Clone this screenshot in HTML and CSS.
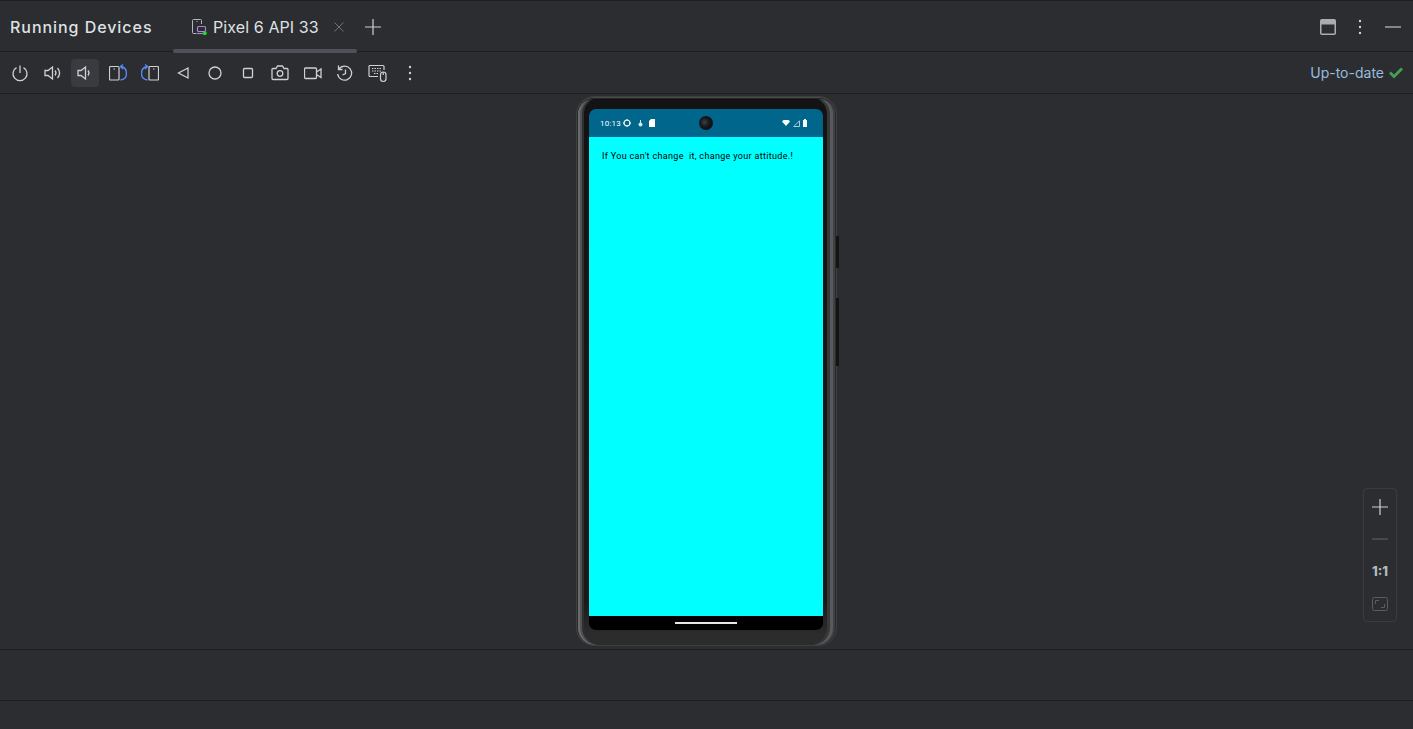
FILE: index.html
```html
<!DOCTYPE html>
<html lang="en">
<head>
    <meta charset="UTF-8">
    <title>Running Devices</title>
    <link rel="stylesheet" href="styles.css">
</head>
<body>
    <div class="header">
        <div class="header-title">Running Devices</div>
        <div class="tab">
            <svg class="tab-icon" width="18" height="18" viewBox="0 0 18 18" fill="none">
                <path d="M6 15.500H3.500a1 1 0 0 1-1-1v-12a1 1 0 0 1 1-1h7a1 1 0 0 1 1 1V6" stroke="#b4b8bf"/>
                <path d="M6.500 3.500h1" stroke="#b4b8bf"/>
                <rect x="7.500" y="8.500" width="8" height="5" rx="1" stroke="#a883d8" stroke-width="1.200"/>
                <path d="M6.500 15.500h8" stroke="#a883d8" stroke-width="1.200"/>
                <circle cx="14.800" cy="15.200" r="2" fill="#1fdc1f"/>
            </svg>
            <span class="tab-label">Pixel 6 API 33</span>
            <svg class="tab-close" width="10" height="10" viewBox="0 0 10 10" fill="none">
                <path d="M.5.5l9 9M9.500.5l-9 9" stroke="#6f737a"/>
            </svg>
        </div>
        <svg class="tab-add" width="18" height="18" viewBox="0 0 18 18" fill="none">
            <path d="M9 1v16M1 9h16" stroke="#ced0d6" stroke-width="1.200"/>
        </svg>
        <div class="header-right">
            <svg width="16" height="16" viewBox="0 0 16 16" fill="none">
                <rect x=".75" y=".75" width="14.500" height="14.500" rx="1" stroke="#a8adb4" stroke-width="1.500"/>
                <rect x="1" y="1" width="14" height="4.500" fill="#a8adb4"/>
            </svg>
            <svg width="4" height="16" viewBox="0 0 4 16" fill="#ced0d6">
                <circle cx="2" cy="2" r="1.200"/><circle cx="2" cy="8" r="1.200"/><circle cx="2" cy="14" r="1.200"/>
            </svg>
            <svg class="header-minimize" width="16" height="16" viewBox="0 0 16 16" fill="none">
                <path d="M0 8h16" stroke="#a8adb4" stroke-width="1.400"/>
            </svg>
        </div>
    </div>

    <div class="toolbar">
        <div class="tool">
            <svg width="18" height="18" viewBox="0 0 18 18" fill="none" stroke="#ced0d6" stroke-width="1.300">
                <path d="M9 1.500v7.500"/><path d="M5.500 3.600a7 7 0 1 0 7 0"/>
            </svg>
        </div>
        <div class="tool">
            <svg width="18" height="18" viewBox="0 0 18 18" fill="none" stroke="#ced0d6" stroke-width="1.300">
                <path d="M1 6.500v5h3l4.500 3.500v-12L4 6.500z"/><path d="M11 6.500c1.200 1.500 1.200 3.500 0 5"/><path d="M13.500 4c2.500 3 2.500 7 0 10"/>
            </svg>
        </div>
        <div class="tool tool-active">
            <svg width="18" height="18" viewBox="0 0 18 18" fill="none" stroke="#ced0d6" stroke-width="1.300">
                <path d="M2 6.500v5h3l4.500 3.500v-12L5 6.500z"/><path d="M12 6.500c1.200 1.500 1.200 3.500 0 5"/>
            </svg>
        </div>
        <div class="tool">
            <svg width="18" height="18" viewBox="0 0 18 18" fill="none">
                <rect x=".5" y="2.500" width="9.500" height="13.500" rx="1" stroke="#ced0d6" stroke-width="1.200"/>
                <path d="M4.500 5h1.500" stroke="#ced0d6"/>
                <path d="M11.500 2.500C15.500 3 17.500 6 17.500 9.500S15.500 15.500 11.500 16" stroke="#548af7" stroke-width="1.400"/>
                <path d="M14 .5L11.500 2.500 14 5" stroke="#548af7" stroke-width="1.300"/>
            </svg>
        </div>
        <div class="tool">
            <svg width="18" height="18" viewBox="0 0 18 18" fill="none">
                <rect x="8" y="2.500" width="9.500" height="13.500" rx="1" stroke="#ced0d6" stroke-width="1.200"/>
                <path d="M12 5h1.500" stroke="#ced0d6"/>
                <path d="M6.500 2.500C2.500 3 .5 6 .5 9.500S2.500 15.500 6.500 16" stroke="#548af7" stroke-width="1.400"/>
                <path d="M4 .5L6.500 2.500 4 5" stroke="#548af7" stroke-width="1.300"/>
            </svg>
        </div>
        <div class="tool">
            <svg width="18" height="18" viewBox="0 0 18 18" fill="none" stroke="#ced0d6" stroke-width="1.300">
                <path d="M14 4v10L4.500 9z"/>
            </svg>
        </div>
        <div class="tool">
            <svg width="18" height="18" viewBox="0 0 18 18" fill="none" stroke="#ced0d6" stroke-width="1.300">
                <circle cx="9" cy="9" r="6"/>
            </svg>
        </div>
        <div class="tool">
            <svg width="18" height="18" viewBox="0 0 18 18" fill="none" stroke="#ced0d6" stroke-width="1.300">
                <rect x="4.500" y="4.500" width="9" height="9" rx="1"/>
            </svg>
        </div>
        <div class="tool">
            <svg width="18" height="18" viewBox="0 0 18 18" fill="none" stroke="#ced0d6" stroke-width="1.300">
                <path d="M1 5.500a1 1 0 0 1 1-1h3L6.500 2h5L13 4.500h3a1 1 0 0 1 1 1v9a1 1 0 0 1-1 1H2a1 1 0 0 1-1-1z"/><circle cx="9" cy="9.500" r="2.800"/>
            </svg>
        </div>
        <div class="tool">
            <svg width="18" height="18" viewBox="0 0 18 18" fill="none" stroke="#ced0d6" stroke-width="1.300">
                <rect x=".5" y="4" width="12" height="10.500" rx="1"/><path d="M12.500 8L17 5v8.500L12.500 10.500"/>
            </svg>
        </div>
        <div class="tool">
            <svg width="18" height="18" viewBox="0 0 18 18" fill="none" stroke="#ced0d6" stroke-width="1.300">
                <path d="M3 5a7 7 0 1 1-1.300 5"/><path d="M2.500 1.500V5.500H6.500"/><path d="M9.500 5.500v4L6.500 11"/>
            </svg>
        </div>
        <div class="tool">
            <svg width="20" height="20" viewBox="0 0 20 20" fill="none" stroke="#ced0d6" stroke-width="1.200">
                <path d="M10 13.500H2a1 1 0 0 1-1-1v-9a1 1 0 0 1 1-1h13a1 1 0 0 1 1 1V7"/>
                <path d="M4 5.500h9M4 8h9M6 10.500h5" stroke-dasharray="1.500 1"/>
                <rect x="12.500" y="9" width="5.500" height="9.500" rx="2.700"/><path d="M15.200 9v3"/>
            </svg>
        </div>
        <div class="tool">
            <svg width="4" height="16" viewBox="0 0 4 16" fill="#ced0d6">
                <circle cx="2" cy="2" r="1.200"/><circle cx="2" cy="8" r="1.200"/><circle cx="2" cy="14" r="1.200"/>
            </svg>
        </div>
        <div class="status">
            <span>Up-to-date</span>
            <svg width="14" height="12" viewBox="0 0 14 12" fill="#499c54">
                <path d="M0 6.500L2 4.500 5 7.500 12 .5 14 2.500 5 11.500z"/>
            </svg>
        </div>
    </div>

    <div class="canvas">
        <div class="phone">
            <div class="phone-key phone-key-power"></div>
            <div class="phone-key phone-key-volume"></div>
            <div class="screen">
                <div class="statusbar">
                    <div class="statusbar-left">
                        <span class="clock">10:13</span>
                        <svg width="8" height="8" viewBox="0 0 8 8" fill="none" stroke="#fff" stroke-width="1.200">
                            <circle cx="4" cy="4" r="3"/><path d="M4 0v2M4 6v2M0 4h2M6 4h2" stroke-width=".8"/>
                        </svg>
                        <svg class="status-mic" width="5" height="7" viewBox="0 0 5 7" fill="#d5e6ee">
                            <circle cx="2.500" cy="4.500" r="2"/><rect x="2" y="0" width="1" height="3"/>
                        </svg>
                        <svg class="status-sd" width="6" height="8" viewBox="0 0 6 8" fill="#fff">
                            <path d="M0 2L2 0h4v8H0z"/>
                        </svg>
                    </div>
                    <div class="camera"></div>
                    <div class="statusbar-right">
                        <svg width="8" height="6" viewBox="0 0 8 6" fill="#fff"><path d="M0 1.500L1.500 0h5L8 1.500 4 6z"/></svg>
                        <svg width="7" height="7" viewBox="0 0 7 7" fill="none" stroke="#d5e6ee" stroke-width=".8"><path d="M6.500.8v5.700H.8z"/></svg>
                        <svg width="4" height="8" viewBox="0 0 4 8" fill="#fff"><path d="M1 0h2v1h1v7H0V1h1z"/></svg>
                    </div>
                </div>
                <div class="app">
                    <p class="app-text">If You can't change  it, change your attitude.!</p>
                </div>
                <div class="navbar"><div class="home-bar"></div></div>
            </div>
        </div>

        <div class="zoom-box">
            <svg width="18" height="18" viewBox="0 0 18 18" fill="none">
                <path d="M9 1v16M1 9h16" stroke="#ced0d6" stroke-width="1.200"/>
            </svg>
            <svg width="18" height="18" viewBox="0 0 18 18" fill="none">
                <path d="M1 9h16" stroke="#5a5d63" stroke-width="1.200"/>
            </svg>
            <span class="zoom-one">1:1</span>
            <svg width="18" height="18" viewBox="0 0 18 18" fill="none" stroke="#5a5d63">
                <rect x="1.500" y="2.500" width="15" height="13" rx="2"/><path d="M4.500 9V5.500H8M13.500 9v3.500H10"/>
            </svg>
        </div>
    </div>

    <div class="strip"></div>
    <div class="strip-bottom"></div>
</body>
</html>
```

FILE: styles.css
```css
* {
    box-sizing: border-box;
}
html, body {
    height: 100%;
}
body {
    margin: 0;
    display: flex;
    flex-direction: column;
    background-color: #2b2d30;
    color: #dfe1e5;
    font-family: Inter, "Noto Sans", sans-serif;
    overflow: hidden;
}
svg {
    display: block;
    flex: none;
}
.header {
    height: 52px;
    display: flex;
    align-items: center;
    padding: 2px 12px 0 10px;
    border-top: 1px solid #1e1f22;
    border-bottom: 1px solid #1e1f22;
}
.header-title {
    width: 163px;
    font-size: 16px;
    font-weight: 500;
    letter-spacing: 0.95px;
    white-space: nowrap;
}
.tab {
    position: relative;
    align-self: stretch;
    display: flex;
    align-items: center;
    width: 184px;
    padding-left: 17px;
}
.tab::after {
    content: "";
    position: absolute;
    left: 0;
    right: 0;
    bottom: -2px;
    height: 4px;
    border-radius: 2px;
    background-color: #4e5157;
}
.tab-label {
    margin-left: 5px;
    font-size: 16px;
    letter-spacing: 0.1px;
    white-space: nowrap;
}
.tab-close {
    margin-left: 15px;
}
.tab-add {
    margin-left: 7px;
}
.header-right {
    margin-left: auto;
    display: flex;
    align-items: center;
    gap: 22px;
}
.header-minimize {
    margin-left: 1px;
}
.toolbar {
    height: 42px;
    display: flex;
    align-items: center;
    padding: 0 10px 0 6px;
    gap: 4.5px;
    border-bottom: 1px solid #1e1f22;
}
.tool {
    width: 28px;
    height: 28px;
    display: flex;
    align-items: center;
    justify-content: center;
    border-radius: 4px;
}
.tool-active {
    background-color: #393b40;
}
.status {
    margin-left: auto;
    display: flex;
    align-items: center;
    gap: 5px;
    color: #97bcdf;
    font-size: 14px;
}
.canvas {
    position: relative;
    flex: 1;
    display: flex;
    align-items: center;
    justify-content: center;
    padding-bottom: 1px;
}
.phone {
    position: relative;
    width: 261px;
    height: 550px;
    padding: 12px 14px 0 12px;
    border: 1px solid #3d3e40;
    border-radius: 18px;
    background: linear-gradient(to bottom, #131314 0, #1a1a1b 92%, #2c2c2d 98%);
    box-shadow: inset 0 1px 0 #4a4b4d, inset 0 2px 0 #242425,
        inset 1px 0 0 #2a2a2b, inset -1px 0 0 #2a2a2b,
        inset 3px 0 0 #6a6b6d, inset -3px 0 0 #3f4042,
        inset 5px 0 0 #505153, inset -6px 0 0 #58595b,
        inset 7px 0 0 #2f2f31, inset -9px 0 0 #37383a;
}
.phone-key {
    position: absolute;
    right: -3px;
    width: 3px;
    background-color: #141415;
}
.phone-key-power {
    top: 139px;
    height: 32px;
}
.phone-key-volume {
    top: 201px;
    height: 68px;
}
.screen {
    width: 234px;
    height: 521px;
    display: flex;
    flex-direction: column;
    border-radius: 7px;
    overflow: hidden;
}
.statusbar {
    position: relative;
    height: 28px;
    display: flex;
    align-items: center;
    justify-content: space-between;
    padding: 0 16px 0 11px;
    background-color: #00668b;
    color: #fff;
}
.statusbar-left, .statusbar-right {
    display: flex;
    align-items: center;
    gap: 3px;
}
.clock {
    font-family: Roboto, sans-serif;
    font-size: 8px;
    letter-spacing: 0.2px;
    margin-right: -1px;
}
.status-mic {
    margin-left: 4px;
}
.status-sd {
    margin-left: 3px;
}
.camera {
    position: absolute;
    left: 110px;
    top: 7px;
    width: 14px;
    height: 14px;
    border-radius: 50%;
    background: radial-gradient(circle at 40% 45%, #3b4148 0, #15171a 40%, #08090a 100%);
}
.app {
    flex: 1;
    background-color: #00ffff;
    padding: 14px 13px;
}
.app-text {
    margin: 0;
    color: #000;
    font-family: Roboto, sans-serif;
    font-size: 9px;
    line-height: 11px;
    letter-spacing: 0.33px;
    white-space: pre;
}
.navbar {
    height: 14px;
    display: flex;
    justify-content: center;
    padding-top: 6px;
    background-color: #000;
}
.home-bar {
    width: 62px;
    height: 2px;
    background-color: #e8e8e8;
}
.zoom-box {
    position: absolute;
    right: 16px;
    bottom: 27px;
    width: 34px;
    height: 134px;
    display: flex;
    flex-direction: column;
    align-items: center;
    justify-content: space-between;
    padding: 9px 0 8px;
    border: 1px solid #393b40;
    border-radius: 4px;
}
.zoom-one {
    color: #b4b8bf;
    font-size: 13px;
    font-weight: 800;
    line-height: 20px;
}
.strip {
    height: 51px;
    border-top: 1px solid #1e1f22;
}
.strip-bottom {
    height: 29px;
    border-top: 1px solid #1e1f22;
}
```
